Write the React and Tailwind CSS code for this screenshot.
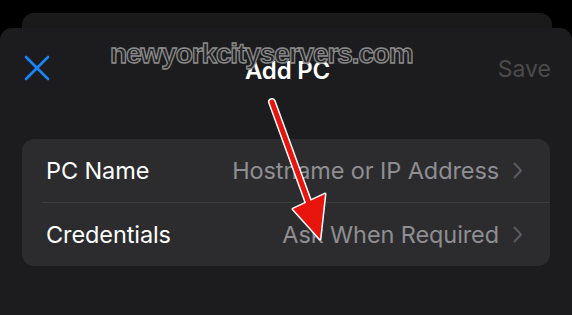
import React from 'react'

function ChevronRight() {
  return (
    <svg width="10" height="17" viewBox="0 0 10 17" fill="none">
      <path d="M1.5 1.5 L8 8.5 L1.5 15.5" stroke="#5b5b60" strokeWidth="2" strokeLinecap="round" strokeLinejoin="round" />
    </svg>
  )
}

function Row({ label, value }) {
  return (
    <div className="flex items-center justify-between h-[63px] pl-[24px] pr-[27px]">
      <span className="text-[23.5px] text-white tracking-[-0.1px]">{label}</span>
      <div className="flex items-center gap-[14px]">
        <span className="text-[23.5px] text-[#8e8e93] tracking-[-0.1px]">{value}</span>
        <ChevronRight />
      </div>
    </div>
  )
}

export default function App() {
  return (
    <div className="relative w-[572px] h-[315px] bg-black overflow-hidden pt-[13px] font-['Inter',sans-serif]">
      {/* stacked sheet behind */}
      <div className="mx-[22px] w-[530px] h-[15px] bg-[#1a1a1b] rounded-t-[12px]" />

      {/* front sheet */}
      <div className="h-[300px] bg-[#1c1c1e] rounded-t-[12px]">
        <div className="grid grid-cols-[1fr_auto_1fr] items-center h-[80px] pl-[24px] pr-[21px]">
          <svg width="26" height="26" viewBox="0 0 26 26" fill="none">
            <path d="M2 2 L24 24 M24 2 L2 24" stroke="#1a84f8" strokeWidth="2.6" strokeLinecap="round" />
          </svg>
          <span className="text-[24px] font-semibold text-white pt-[5px] tracking-[-0.2px]">Add PC</span>
          <span className="justify-self-end text-[23px] text-[#4a4a4d] pt-[2px]">Save</span>
        </div>

        <div className="mt-[31px] mx-[22px] bg-[#2c2c2e] rounded-[12px]">
          <Row label="PC Name" value="Hostname or IP Address" />
          <div className="ml-[20px] h-px bg-[#3b3b3e]" />
          <Row label="Credentials" value="Ask When Required" />
        </div>
      </div>

      {/* watermark */}
      <div className="absolute left-[110px] top-[40px] leading-none text-[28px] font-bold text-[#232325] font-['Liberation_Sans',sans-serif] [-webkit-text-stroke:1.3px_#8c8c8c] tracking-[-1.1px]">
        newyorkcityservers.com
      </div>

      {/* annotation arrow */}
      <svg className="absolute left-0 top-0 pointer-events-none" width="572" height="315" viewBox="0 0 572 315">
        <line x1="272" y1="102" x2="312" y2="212" stroke="#ffffff" strokeWidth="8" strokeLinecap="round" />
        <polygon points="293,209 325,194 320,239" fill="#ffffff" stroke="#ffffff" strokeWidth="3" strokeLinejoin="round" />
        <line x1="272" y1="102" x2="312" y2="212" stroke="#e8150f" strokeWidth="5" strokeLinecap="round" />
        <polygon points="293,209 325,194 320,239" fill="#e8150f" />
      </svg>
    </div>
  )
}
